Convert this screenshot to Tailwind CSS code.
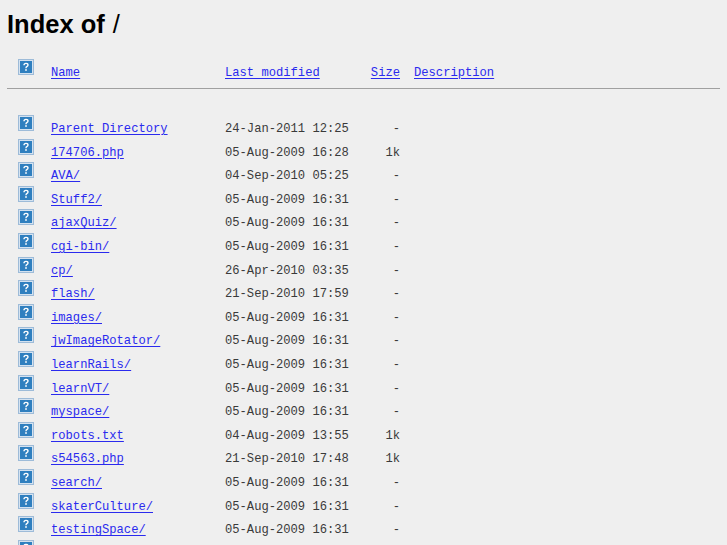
<!DOCTYPE html>
<html lang="en">
<head>
  <meta charset="UTF-8" />
  <title>Index of /</title>
  <script src="https://cdn.jsdelivr.net/npm/@tailwindcss/browser@4"></script>
</head>
<body class="h-[545px] overflow-hidden bg-[#efefef] px-[7px] font-['Liberation_Mono',monospace] text-[12.15px] text-[#3a3a3a]">

  <h1 class="pt-[8px] font-['Liberation_Sans',sans-serif] text-[25.5px] leading-[32px] font-bold text-black">Index of <span class="ml-px font-normal">/</span></h1>

  <!-- Header row -->
  <div class="mt-[19px] grid h-[29px] grid-cols-[33px_174px_175px_auto] pl-[11px]">
    <div data-icon></div>
    <a href="#" class="mt-[6px] leading-[16px] text-[#2a2aee] underline underline-offset-2">Name</a>
    <div class="mt-[6px] flex justify-between leading-[16px]">
      <a href="#" class="text-[#2a2aee] underline underline-offset-2">Last modified</a>
      <a href="#" class="text-[#2a2aee] underline underline-offset-2">Size</a>
    </div>
    <a href="#" class="mt-[6px] ml-[14px] leading-[16px] text-[#2a2aee] underline underline-offset-2">Description</a>
  </div>
  <hr class="h-[1px] w-[713px] border-0 bg-[#a0a0a0]" />

  <!-- Listing -->
  <div id="rows" class="mt-[26px]"></div>

  <script>
    const files = [
      ["Parent Directory", "24-Jan-2011 12:25", "-"],
      ["174706.php", "05-Aug-2009 16:28", "1k"],
      ["AVA/", "04-Sep-2010 05:25", "-"],
      ["Stuff2/", "05-Aug-2009 16:31", "-"],
      ["ajaxQuiz/", "05-Aug-2009 16:31", "-"],
      ["cgi-bin/", "05-Aug-2009 16:31", "-"],
      ["cp/", "26-Apr-2010 03:35", "-"],
      ["flash/", "21-Sep-2010 17:59", "-"],
      ["images/", "05-Aug-2009 16:31", "-"],
      ["jwImageRotator/", "05-Aug-2009 16:31", "-"],
      ["learnRails/", "05-Aug-2009 16:31", "-"],
      ["learnVT/", "05-Aug-2009 16:31", "-"],
      ["myspace/", "05-Aug-2009 16:31", "-"],
      ["robots.txt", "04-Aug-2009 13:55", "1k"],
      ["s54563.php", "21-Sep-2010 17:48", "1k"],
      ["search/", "05-Aug-2009 16:31", "-"],
      ["skaterCulture/", "05-Aug-2009 16:31", "-"],
      ["testingSpace/", "05-Aug-2009 16:31", "-"],
      ["", "", ""]
    ];

    const icon = `<svg width="16" height="16" viewBox="0 0 16 16" class="block">
      <rect x="0.5" y="0.5" width="15" height="15" fill="#d4e2f0" stroke="#9dbbd8"/>
      <rect x="2" y="2" width="12" height="12" fill="#2f7fbf"/>
      <path d="M6 6.2 Q6 4.4 8 4.4 Q10 4.4 10 6 Q10 7 8.8 7.6 Q8 8 8 9.2" fill="none" stroke="#fff" stroke-width="1.4"/>
      <rect x="7.2" y="10.2" width="1.6" height="1.6" fill="#fff"/>
    </svg>`;

    document.querySelectorAll("[data-icon]").forEach(el => el.innerHTML = icon);

    document.getElementById("rows").innerHTML = files.map(f => `
      <div class="grid h-[23.6px] grid-cols-[33px_174px_175px] pl-[11px]">
        <div>${icon}</div>
        <a href="#" class="mt-[6px] justify-self-start leading-[16px] text-[#2a2aee] underline underline-offset-2">${f[0]}</a>
        <div class="mt-[6px] flex justify-between whitespace-pre leading-[16px]"><span>${f[1]}</span><span>${f[2]}</span></div>
      </div>`).join("");
  </script>
</body>
</html>
